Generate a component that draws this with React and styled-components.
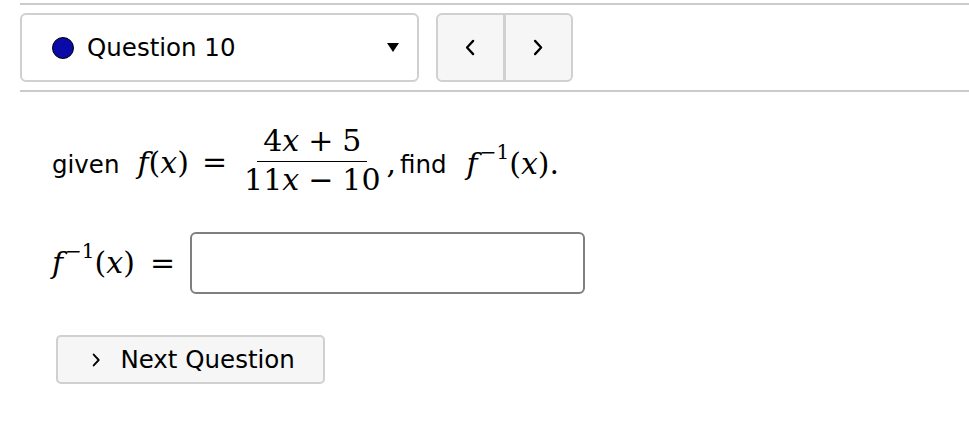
import React from "react";
import styled, { createGlobalStyle } from "styled-components";

const Global = createGlobalStyle`
  html, body { margin: 0; padding: 0; background: #fff; }
  body { font-family: "DejaVu Sans", sans-serif; color: #000; }
`;

const Page = styled.div`
  width: 969px;
  height: 438px;
  padding-top: 3px;
  box-sizing: border-box;
`;

const Header = styled.div`
  margin-left: 20px;
  border-top: 2px solid #cbcbcb;
  border-bottom: 2px solid #cbcbcb;
  padding: 8px 0 8px 0;
  display: flex;
  gap: 17px;
  height: 69px;
`;

const Select = styled.div`
  width: 399px;
  box-sizing: border-box;
  border: 2px solid #d0d0d0;
  border-radius: 6px;
  display: flex;
  align-items: center;
  padding: 0 18px 0 30px;
  background: #fff;
`;

const Dot = styled.span`
  width: 22px;
  height: 22px;
  border-radius: 50%;
  background: #0a0aa8;
  border: 1.5px solid #000;
  box-sizing: border-box;
  margin-right: 13px;
`;

const SelectLabel = styled.span`
  font-size: 24.5px;
  flex: 1;
`;

const Caret = styled.span`
  width: 0;
  height: 0;
  border-left: 6px solid transparent;
  border-right: 6px solid transparent;
  border-top: 9px solid #000;
`;

const NavGroup = styled.div`
  display: flex;
  border: 2px solid #d0d0d0;
  border-radius: 6px;
  background: #f6f6f6;
  overflow: hidden;
`;

const NavButton = styled.div`
  width: 65px;
  display: flex;
  align-items: center;
  justify-content: center;
  & + & { border-left: 3px solid #d0d0d0; }
`;

const Body = styled.div`
  padding: 32px 0 0 52px;
`;

const Prompt = styled.div`
  display: flex;
  align-items: center;
  height: 80px;
`;

const Text = styled.span`
  font-family: "DejaVu Sans", sans-serif;
  font-size: 24.5px;
  margin: ${(p) => p.$m || "0"};
`;

const Math = styled.span`
  font-family: "DejaVu Serif", serif;
  font-size: 30px;
  display: inline-block;
  white-space: pre;
  line-height: 1.2;
`;

const I = styled.i`
  font-style: italic;
`;

const Sup = styled.sup`
  font-size: 20px;
  vertical-align: 15px;
  line-height: 0;
  margin-left: 2px;
`;

const Op = styled.span`
  margin: 0 ${(p) => p.$r ?? 6}px 0 ${(p) => p.$l ?? 6}px;
`;

const Frac = styled.span`
  display: inline-flex;
  flex-direction: column;
  align-items: center;
  vertical-align: middle;
`;

const Num = styled.span`
  padding: 0 6px 5px;
  line-height: 30px;
  border-bottom: 1.5px solid #000;
`;

const Den = styled.span`
  padding: 3px 6px 8px;
  line-height: 30px;
`;

const AnswerRow = styled.div`
  display: flex;
  align-items: center;
  margin-top: 28px;
`;

const AnswerInput = styled.input`
  width: 395px;
  height: 62px;
  box-sizing: border-box;
  border: 2px solid #7f7f7f;
  border-radius: 6px;
  margin-left: 7px;
  outline: none;
`;

const NextButton = styled.button`
  margin: 41px 0 0 4px;
  width: 269px;
  height: 49px;
  box-sizing: border-box;
  background: #f6f6f6;
  border: 2px solid #d0d0d0;
  border-radius: 5px;
  font-family: "DejaVu Sans", sans-serif;
  font-size: 24.5px;
  color: #000;
  display: flex;
  align-items: center;
  padding: 0 0 0 34px;
  gap: 20px;
`;

const Chevron = ({ dir, size = 16 }) => (
  <svg width={size * 0.6} height={size} viewBox="0 0 10 16" fill="none">
    <path
      d={dir === "left" ? "M8 1.5 L2 8 L8 14.5" : "M2 1.5 L8 8 L2 14.5"}
      stroke="#000"
      strokeWidth="2.2"
      strokeLinecap="round"
      strokeLinejoin="round"
    />
  </svg>
);

export default function App() {
  return (
    <Page>
      <Global />
      <Header>
        <Select>
          <Dot />
          <SelectLabel>Question 10</SelectLabel>
          <Caret />
        </Select>
        <NavGroup>
          <NavButton>
            <Chevron dir="left" size={17} />
          </NavButton>
          <NavButton>
            <Chevron dir="right" size={17} />
          </NavButton>
        </NavGroup>
      </Header>
      <Body>
        <Prompt>
          <Text $m="0 18px 0 0">given</Text>
          <Math>
            <I>f</I>(<I>x</I>)<Op $l={13} $r={11}>=</Op>
            <Frac>
              <Num>
                4<I>x</I>
                <Op $l={9} $r={9}>+</Op>5
              </Num>
              <Den>
                11<I>x</I>
                <Op $l={9} $r={9}>−</Op>10
              </Den>
            </Frac>
            ,
          </Math>
          <Text $m="0 20px 0 4px">find</Text>
          <Math>
            <I>f</I>
            <Sup>−1</Sup>(<I>x</I>).
          </Math>
        </Prompt>
        <AnswerRow>
          <Math>
            <I>f</I>
            <Sup>−1</Sup>(<I>x</I>)<Op $l={15} $r={8}>=</Op>
          </Math>
          <AnswerInput />
        </AnswerRow>
        <NextButton>
          <Chevron dir="right" size={14} />
          Next Question
        </NextButton>
      </Body>
    </Page>
  );
}
